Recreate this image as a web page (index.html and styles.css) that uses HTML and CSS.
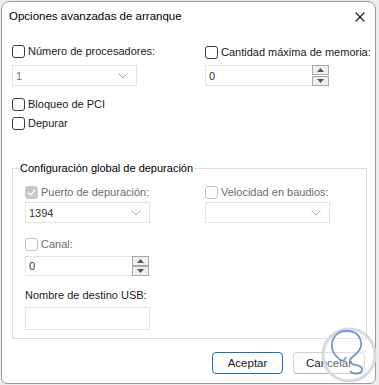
FILE: index.html
```html
<!DOCTYPE html>
<html lang="es">
<head>
<meta charset="utf-8">
<title>Opciones avanzadas de arranque</title>
<link rel="stylesheet" href="styles.css">
</head>
<body>
<div class="dialog">
  <div class="titlebar">
    <span class="title">Opciones avanzadas de arranque</span>
    <svg class="close" width="10" height="10" viewBox="0 0 10 10"><path d="M0.5 0.5 L9.5 9.5 M9.5 0.5 L0.5 9.5" stroke="#1a1a1a" stroke-width="1.1" fill="none"/></svg>
  </div>
  <div class="body">
    <div class="cols top">
      <div class="col">
        <label class="check-row"><span class="cb"></span><span>Número de procesadores:</span></label>
        <div class="select"><span class="val gray">1</span><svg class="chev" width="10" height="6" viewBox="0 0 10 6"><path d="M0.5 0.5 L5 5 L9.5 0.5" stroke="#a0a0a0" fill="none"/></svg></div>
        <label class="check-row r-bloqueo"><span class="cb"></span><span>Bloqueo de PCI</span></label>
        <label class="check-row r-depurar"><span class="cb"></span><span>Depurar</span></label>
      </div>
      <div class="col">
        <label class="check-row shift"><span class="cb"></span><span>Cantidad máxima de memoria:</span></label>
        <div class="spinner"><span class="val">0</span>
          <div class="spin"><span class="sb"><svg width="7" height="4" viewBox="0 0 7 4"><path d="M0 4 L3.5 0 L7 4Z" fill="#555"/></svg></span><span class="sb"><svg width="7" height="4" viewBox="0 0 7 4"><path d="M0 0 L3.5 4 L7 0Z" fill="#555"/></svg></span></div>
        </div>
      </div>
    </div>

    <div class="group">
      <span class="legend">Configuración global de depuración</span>
      <div class="cols">
        <div class="col">
          <label class="check-row dis"><span class="cb checked"><svg width="9" height="7" viewBox="0 0 9 7"><path d="M1 3.5 L3.5 6 L8 1" stroke="#fff" stroke-width="1.2" fill="none"/></svg></span><span>Puerto de depuración:</span></label>
          <div class="select s2"><span class="val">1394</span><svg class="chev" width="10" height="6" viewBox="0 0 10 6"><path d="M0.5 0.5 L5 5 L9.5 0.5" stroke="#b0b0b0" fill="none"/></svg></div>
          <label class="check-row dis r-canal"><span class="cb"></span><span>Canal:</span></label>
          <div class="spinner s3"><span class="val">0</span>
            <div class="spin"><span class="sb"><svg width="7" height="4" viewBox="0 0 7 4"><path d="M0 4 L3.5 0 L7 4Z" fill="#555"/></svg></span><span class="sb"><svg width="7" height="4" viewBox="0 0 7 4"><path d="M0 0 L3.5 4 L7 0Z" fill="#555"/></svg></span></div>
          </div>
          <div class="lbl">Nombre de destino USB:</div>
          <div class="textbox"></div>
        </div>
        <div class="col">
          <label class="check-row dis"><span class="cb dcb"></span><span>Velocidad en baudios:</span></label>
          <div class="select s2"><span class="val"></span><svg class="chev" width="10" height="6" viewBox="0 0 10 6"><path d="M0.5 0.5 L5 5 L9.5 0.5" stroke="#b0b0b0" fill="none"/></svg></div>
        </div>
      </div>
    </div>

    <div class="buttons">
      <button class="btn primary">Aceptar</button>
      <button class="btn">Cancelar</button>
    </div>
  </div>
  <svg class="mark" width="60" height="60" viewBox="0 0 60 60">
    <circle cx="30" cy="30" r="26" stroke="#d6d9de" stroke-width="3" fill="rgba(255,255,255,0.3)"/>
    <path d="M19 33 C8 24 12 6 28 6 C42 6 46 20 38 28 C34 32 30 33 31 37 C32 41 44 39 43 45 C42 50 33 49 31 46" stroke="#4f80c4" stroke-width="1.8" fill="none" opacity="0.8"/>
    <path d="M19 33 C22 37 26 36 27 32" stroke="#4f80c4" stroke-width="1.6" fill="none" opacity="0.8"/>
  </svg>
</div>
</body>
</html>
```

FILE: styles.css
```css
html, body {
  margin: 0;
  padding: 0;
  width: 379px;
  height: 385px;
  overflow: hidden;
}
body {
  background: #eeeeee;
  font-family: "Liberation Sans", Arial, sans-serif;
  font-size: 11px;
  color: #1a1a1a;
}
.dialog {
  position: relative;
  margin: 1px 0 0 1px;
  width: 373px;
  height: 381px;
  background: #ffffff;
  border: 1px solid #9a9a9a;
  border-radius: 8px 8px 6px 6px;
}
.titlebar {
  height: 28px;
  display: flex;
  align-items: center;
  justify-content: space-between;
  padding: 0 10px 0 7px;
}
.title {
  font-size: 11.5px;
  color: #000;
}
.close {
  margin-top: 1px;
}
.body {
  padding: 14px 10px 0 10px;
}
.cols {
  display: grid;
  grid-template-columns: 193px 1fr;
}
.col {
  display: flex;
  flex-direction: column;
  align-items: flex-start;
}
.check-row {
  display: flex;
  align-items: center;
  gap: 3px;
  height: 14px;
  line-height: 14px;
  white-space: nowrap;
}
.check-row.shift {
  margin-top: 1px;
}
.cb {
  width: 11px;
  height: 11px;
  border: 1px solid #3a3a3a;
  border-radius: 3px;
  display: flex;
  align-items: center;
  justify-content: center;
  flex: none;
}
.dis {
  color: #6d6d6d;
}
.dis .cb {
  border-color: #c2c2c2;
}
.cb.checked {
  background: #c8c8c8;
  border-color: #c8c8c8;
}
.select, .spinner, .textbox {
  box-sizing: border-box;
  width: 125px;
  height: 21px;
  border: 1px solid #e2e2e2;
  display: flex;
  align-items: center;
  justify-content: space-between;
  padding-left: 3px;
}
.select {
  margin-top: 7px;
  padding-right: 8px;
}
.spinner {
  margin-top: 6px;
  padding-right: 0;
  border-right-color: #fff;
}
.val {
  color: #333;
}
.val.gray {
  color: #777;
}
.spin {
  display: flex;
  flex-direction: column;
  height: 21px;
  margin-top: -1px;
  margin-bottom: -1px;
}
.sb {
  box-sizing: border-box;
  width: 17px;
  height: 10px;
  border: 1px solid #a9a9a9;
  background: #efefef;
  display: flex;
  align-items: center;
  justify-content: center;
}
.sb + .sb {
  margin-top: 1px;
}
.r-bloqueo {
  margin-top: 11px;
}
.r-depurar {
  margin-top: 5px;
}
.group {
  position: relative;
  margin-top: 38px;
  width: 355px;
  box-sizing: border-box;
  border: 1px solid #dcdcdc;
  padding: 16px 0 8px 12px;
}
.legend {
  position: absolute;
  left: 6px;
  top: -9px;
  background: #fff;
  padding: 0 1px;
  line-height: 16px;
  color: #000;
}
.group .cols {
  grid-template-columns: 180px 1fr;
}
.s2 {
  margin-top: 3px;
  height: 21px;
}
.r-canal {
  margin-top: 14px;
}
.s3 {
  margin-top: 5px;
  height: 20px;
}
.s3 .spin {
  height: 20px;
}
.s3 .sb + .sb {
  margin-top: 0;
}
.lbl {
  margin-top: 12px;
  line-height: 14px;
  color: #1a1a1a;
}
.textbox {
  margin-top: 5px;
  height: 23px;
}
.buttons {
  display: flex;
  justify-content: flex-end;
  gap: 10px;
  margin-top: 13px;
}
.btn {
  box-sizing: border-box;
  width: 72px;
  height: 22px;
  font-family: inherit;
  font-size: 11.5px;
  color: #1a1a1a;
  background: #fdfdfd;
  border: 1px solid #d0d0d0;
  border-bottom-color: #b8b8b8;
  border-radius: 4px;
  padding: 0;
}
.btn.primary {
  width: 71px;
  border: 1px solid #1a6fc4;
  box-shadow: inset 0 0 0 1px #ffffff;
}
.mark {
  position: absolute;
  left: 317px;
  top: 323px;
  pointer-events: none;
}
```
